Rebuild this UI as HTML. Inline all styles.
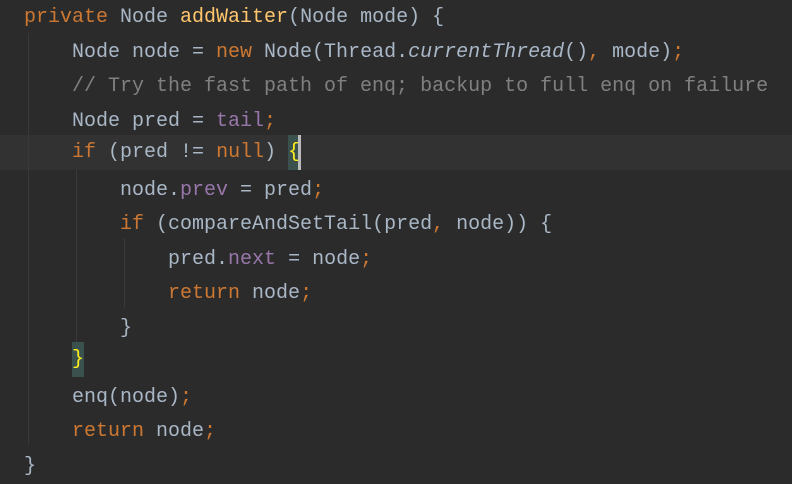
<!DOCTYPE html>
<html><head><style>
html,body{margin:0;padding:0;}
body{width:792px;height:483px;background:#2b2b2b;position:relative;overflow:hidden;font-family:"Liberation Mono","Noto Sans CJK SC",monospace;font-size:20px;color:#a9b7c6;}
.l{position:absolute;left:24px;height:34.5px;line-height:34.5px;white-space:pre;}
.k{color:#cc7832}.m{color:#ffc66d}.f{color:#9876aa}.c{color:#808080}.i{font-style:italic}
.g{position:absolute;width:1px;background:#393939}
.hb{background:#3b514d;color:#ffef1c;display:inline-block;height:35px;vertical-align:top}
</style></head><body>
<div style="position:absolute;left:0;top:135px;width:792px;height:35px;background:#323232"></div>
<div class="g" style="left:28px;top:33px;height:412px"></div>
<div class="g" style="left:76px;top:170px;height:172px"></div>
<div class="g" style="left:124px;top:238px;height:70px"></div>
<div class="l" style="top:1px"><span class="k">private </span>Node <span class="m">addWaiter</span>(Node mode) {</div>
<div class="l" style="top:35.5px">    Node node = <span class="k">new </span>Node(Thread.<span class="i">currentThread</span>()<span class="k">, </span>mode)<span class="k">;</span></div>
<div class="l c" style="top:70px">    // Try the fast path of enq; backup to full enq on failure</div>
<div class="l" style="top:104.5px">    Node pred = <span class="f">tail</span><span class="k">;</span></div>
<div class="l" style="top:135px;height:35px;line-height:35px">    <span class="k">if </span>(pred != <span class="k">null</span>) <span class="hb">{</span></div>
<div style="position:absolute;left:298px;top:135px;width:3px;height:35px;background:#bbb"></div>
<div class="l" style="top:173.5px">        node.<span class="f">prev</span> = pred<span class="k">;</span></div>
<div class="l" style="top:208px">        <span class="k">if </span>(compareAndSetTail(pred<span class="k">, </span>node)) {</div>
<div class="l" style="top:242.5px">            pred.<span class="f">next</span> = node<span class="k">;</span></div>
<div class="l" style="top:277px">            <span class="k">return </span>node<span class="k">;</span></div>
<div class="l" style="top:311.5px">        }</div>
<div class="l" style="top:342px;height:35px;line-height:35px">    <span class="hb">}</span></div>
<div class="l" style="top:380.5px">    enq(node)<span class="k">;</span></div>
<div class="l" style="top:415px">    <span class="k">return </span>node<span class="k">;</span></div>
<div class="l" style="top:449.5px">}</div>
</body></html>
